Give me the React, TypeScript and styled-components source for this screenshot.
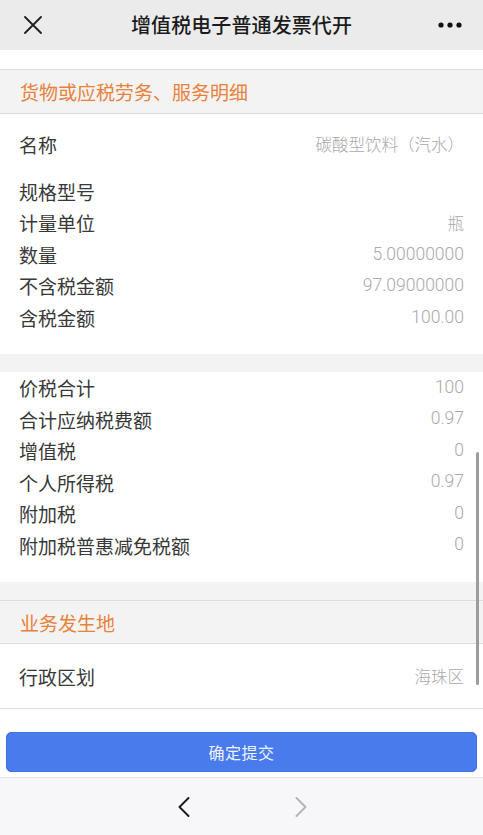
import React from "react";
import styled, { createGlobalStyle } from "styled-components";

const GlobalStyle = createGlobalStyle`
  html, body, #root { margin: 0; padding: 0; height: 100%; }
  body {
    font-family: "Noto Sans CJK SC", "Noto Sans", sans-serif;
    background: #ffffff;
    -webkit-font-smoothing: antialiased;
  }
  * { box-sizing: border-box; }
`;

const Page = styled.div`
  height: 100vh;
  display: flex;
  flex-direction: column;
  overflow: hidden;
  background: #ffffff;
`;

const Header = styled.header`
  height: 50px;
  flex: none;
  background: #ebebeb;
  display: grid;
  grid-template-columns: 80px 1fr 80px;
  align-items: center;
`;

const HeaderIcon = styled.div<{ $align: "start" | "end" }>`
  display: flex;
  justify-content: ${(p) => (p.$align === "start" ? "flex-start" : "flex-end")};
  padding: ${(p) => (p.$align === "start" ? "0 0 0 24px" : "0 21px 0 0")};
  align-items: center;
`;

const Title = styled.h1`
  margin: 0;
  text-align: center;
  font-size: 20px;
  font-weight: 500;
  color: #1b1b1b;
  line-height: 50px;
  letter-spacing: 0.1px;
`;

const Scroll = styled.main`
  flex: none;
  height: 659px;
  position: relative;
  overflow: hidden;
  display: flex;
  flex-direction: column;
`;

const TopSpacer = styled.div`
  height: 19px;
  background: #ffffff;
`;

const SectionHead = styled.div`
  height: 45px;
  background: #f3f3f3;
  border-top: 1px solid #dcdcdc;
  border-bottom: 1px solid #dcdcdc;
  display: flex;
  align-items: center;
  padding-left: 20px;
  font-size: 19px;
  color: #e8813a;
  line-height: 1;
`;

const Card = styled.section`
  background: #ffffff;
  padding-bottom: 21px;
`;

const Gap = styled.div`
  height: 18px;
  background: #f3f3f3;
`;

const Row = styled.div<{ $h: number; $border?: boolean }>`
  height: ${(p) => p.$h}px;
  display: flex;
  align-items: center;
  justify-content: space-between;
  padding: 0 19px 0 19px;
  border-bottom: ${(p) => (p.$border ? "1px solid #dedede" : "none")};
`;

const Label = styled.span`
  font-size: 19px;
  color: #383838;
  line-height: 1;
`;

const Value = styled.span<{ $cjk?: boolean }>`
  font-family: ${(p) =>
    p.$cjk ? `"Noto Sans CJK SC", sans-serif` : `Roboto, "Noto Sans CJK SC", sans-serif`};
  font-size: ${(p) => (p.$cjk ? "16.5px" : "17.5px")};
  font-weight: 300;
  color: #a9a9a9;
  line-height: 1;
`;

const ScrollThumb = styled.div`
  position: absolute;
  right: 4px;
  top: 402px;
  width: 3px;
  height: 233px;
  border-radius: 2px;
  background: #9c9c9c;
`;

const Footer = styled.div`
  flex: none;
  height: 68px;
  padding: 23px 6px 5px 6px;
  background: #ffffff;
`;

const SubmitButton = styled.button`
  width: 100%;
  height: 40px;
  border: 1px solid #4070e2;
  border-radius: 5px;
  background: #4a7bec;
  color: #eef3ff;
  font-family: "Noto Sans CJK SC", sans-serif;
  font-size: 16px;
  letter-spacing: 0.5px;
  cursor: pointer;
`;

const BottomBar = styled.nav`
  flex: 1;
  background: #f7f7f9;
  border-top: 1px solid #e4e4e6;
  display: flex;
  align-items: center;
  justify-content: center;
  gap: 105px;
  padding-left: 2px;
`;

const NavButton = styled.span`
  display: flex;
  align-items: center;
`;

const Close = () => (
  <svg width="18" height="18" viewBox="0 0 18 18">
    <path d="M1 1 L17 17 M17 1 L1 17" stroke="#1e1e1e" strokeWidth="1.8" strokeLinecap="round" />
  </svg>
);

const More = () => (
  <svg width="24" height="6" viewBox="0 0 24 6">
    <circle cx="3" cy="3" r="2.6" fill="#111" />
    <circle cx="12" cy="3" r="2.6" fill="#111" />
    <circle cx="21" cy="3" r="2.6" fill="#111" />
  </svg>
);

const Chevron = ({ dir, color }: { dir: "left" | "right"; color: string }) => (
  <svg width="12" height="20" viewBox="0 0 12 20">
    <path
      d={dir === "left" ? "M10.5 1 L1.5 10 L10.5 19" : "M1.5 1 L10.5 10 L1.5 19"}
      fill="none"
      stroke={color}
      strokeWidth="1.9"
      strokeLinecap="round"
      strokeLinejoin="round"
    />
  </svg>
);

const goods: [string, string][] = [
  ["规格型号", ""],
  ["计量单位", "瓶"],
  ["数量", "5.00000000"],
  ["不含税金额", "97.09000000"],
  ["含税金额", "100.00"],
];

const taxes: [string, string][] = [
  ["价税合计", "100"],
  ["合计应纳税费额", "0.97"],
  ["增值税", "0"],
  ["个人所得税", "0.97"],
  ["附加税", "0"],
  ["附加税普惠减免税额", "0"],
];

const isCjk = (s: string) => /[\u4e00-\u9fff]/.test(s);

export default function App() {
  return (
    <>
      <GlobalStyle />
      <Page>
        <Header>
          <HeaderIcon $align="start">
            <Close />
          </HeaderIcon>
          <Title>增值税电子普通发票代开</Title>
          <HeaderIcon $align="end">
            <More />
          </HeaderIcon>
        </Header>
        <Scroll>
          <TopSpacer />
          <SectionHead>货物或应税劳务、服务明细</SectionHead>
          <Card>
            <Row $h={62}>
              <Label>名称</Label>
              <Value $cjk>碳酸型饮料（汽水）</Value>
            </Row>
            {goods.map(([l, v]) => (
              <Row key={l} $h={31.5}>
                <Label>{l}</Label>
                <Value $cjk={isCjk(v)}>{v}</Value>
              </Row>
            ))}
          </Card>
          <Gap />
          <Card>
            {taxes.map(([l, v]) => (
              <Row key={l} $h={31.5}>
                <Label>{l}</Label>
                <Value>{v}</Value>
              </Row>
            ))}
          </Card>
          <Gap />
          <SectionHead>业务发生地</SectionHead>
          <Row $h={65} $border>
            <Label>行政区划</Label>
            <Value $cjk>海珠区</Value>
          </Row>
          <ScrollThumb />
        </Scroll>
        <Footer>
          <SubmitButton>确定提交</SubmitButton>
        </Footer>
        <BottomBar>
          <NavButton>
            <Chevron dir="left" color="#1a1a1a" />
          </NavButton>
          <NavButton>
            <Chevron dir="right" color="#b4b4b4" />
          </NavButton>
        </BottomBar>
      </Page>
    </>
  );
}
